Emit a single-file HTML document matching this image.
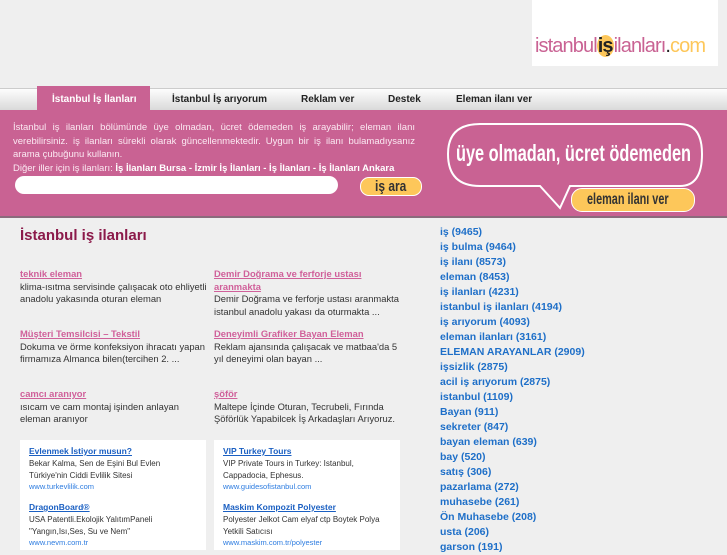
<!DOCTYPE html><html><head><meta charset="utf-8"><style>
body{margin:0;width:727px;height:545px;overflow:hidden;background:#efefef;font-family:"Liberation Sans",sans-serif;position:relative}
.a{position:absolute}
.logo{left:532px;top:0;width:186px;height:66px;background:#fff;overflow:hidden}
.nav{left:0;top:88px;width:727px;height:22px;background:linear-gradient(#fdfdfd,#d8d8d8);border-top:1px solid #ccc}
.nav span{position:absolute;top:5px;font-size:10px;font-weight:bold;color:#222}
.tab{left:37px;top:86px;width:113px;height:24px;background:#c96293}
.pink{left:0;top:110px;width:727px;height:106px;background:#c96293;border-bottom:2px solid #8a6b7c}
.intro{left:13px;top:121px;width:402px;font-size:9.5px;line-height:13.5px;color:#fbe9f2;text-align:justify}
.ttl{left:20px;top:227px;font-size:15px;font-weight:bold;color:#8b1a4a}
.it{position:absolute;width:196px;font-size:9.4px;line-height:12.7px;color:#333}
.it a{color:#d0609a;font-weight:bold;text-decoration:underline;display:block}
.ad{position:absolute;top:440px;width:186px;height:110px;background:#fff;font-size:8px;line-height:12px;color:#333}
.ad a{color:#1a5fc2;font-weight:bold;text-decoration:underline;font-size:8.5px}
.ad u{color:#2d7ce0;text-decoration:none;font-size:7.5px;display:block;line-height:9px}
.tags{left:440px;top:225px;font-size:10.5px;font-weight:bold;color:#1e6fc8;line-height:15px}
.cond{white-space:nowrap;transform-origin:left center;display:inline-block}
</style></head><body>
<div class="a logo"><div class="a" style="left:3px;top:35px;font-size:20px;color:#c96293;letter-spacing:-0.9px;white-space:nowrap">istanbul<span style="background:#fdc75a;border-radius:50%;color:#222;font-weight:bold;padding:0 1px">iş</span>ilanları<span style="color:#222">.</span><span style="color:#fdc75a">com</span></div></div>
<div class="a nav"><span style="left:172px">İstanbul İş arıyorum</span><span style="left:301px">Reklam ver</span><span style="left:388px">Destek</span><span style="left:456px">Eleman ilanı ver</span></div>
<div class="a tab"><span class="a" style="left:15px;top:8px;font-size:10px;font-weight:bold;color:#fff;white-space:nowrap">İstanbul İş İlanları</span></div>
<div class="a pink"></div>
<div class="a intro">İstanbul iş ilanları bölümünde üye olmadan, ücret ödemeden iş arayabilir; eleman ilanı verebilirsiniz. iş ilanları sürekli olarak güncellenmektedir. Uygun bir iş ilanı bulamadıysanız arama çubuğunu kullanın.<br>Diğer iller için iş ilanları: <b style="color:#fff">İş İlanları Bursa - İzmir İş İlanları - İş İlanları - İş İlanları Ankara</b></div>
<div class="a" style="left:15px;top:176px;width:323px;height:18px;background:#fff;border-radius:9px"></div>
<div class="a" style="left:360px;top:177px;width:60px;height:17px;background:#fdc75a;border:1px solid #fff;border-radius:9px;font-size:15px;line-height:17px;color:#333;font-weight:bold"><span class="cond" style="position:absolute;left:14px;transform:scaleX(.8)">iş ara</span></div>
<svg class="a" style="left:440px;top:118px" width="270" height="100"><path d="M40 6 H240 Q262 6 262 36 Q262 68 240 68 H130 L120 90 L100 68 H40 Q8 68 8 36 Q8 6 40 6Z" fill="none" stroke="#fff" stroke-width="2"/></svg>
<div class="a" style="left:456px;top:140px;font-size:23px;font-weight:bold;color:#fff"><span class="cond" style="transform:scaleX(.71)">üye olmadan, ücret ödemeden</span></div>
<div class="a" style="left:571px;top:188px;width:122px;height:22px;background:#fdc75a;border:1px solid #fff;border-radius:11px;line-height:22px;font-size:16px;color:#333;font-weight:bold"><span class="cond" style="position:absolute;left:15px;transform:scaleX(.68)">eleman ilanı ver</span></div>
<div class="a ttl">İstanbul iş ilanları</div>
<div class="it" style="left:20px;top:268px"><a>teknik eleman</a>klima-ısıtma servisinde çalışacak oto ehliyetli anadolu yakasında oturan eleman</div>
<div class="it" style="left:214px;top:268px;width:185px"><a>Demir Doğrama ve ferforje ustası aranmakta</a>Demir Doğrama ve ferforje ustası aranmakta istanbul anadolu yakası da oturmakta ...</div>
<div class="it" style="left:20px;top:328px"><a>Müşteri Temsilcisi – Tekstil</a>Dokuma ve örme konfeksiyon ihracatı yapan firmamıza Almanca bilen(tercihen 2. ...</div>
<div class="it" style="left:214px;top:328px;width:185px"><a>Deneyimli Grafiker Bayan Eleman</a>Reklam ajansında çalışacak ve matbaa'da 5 yıl deneyimi olan bayan ...</div>
<div class="it" style="left:20px;top:388px;width:180px"><a>camcı aranıyor</a>ısıcam ve cam montaj işinden anlayan eleman aranıyor</div>
<div class="it" style="left:214px;top:388px;width:185px"><a>şöför</a>Maltepe İçinde Oturan, Tecrubeli, Fırında Şöförlük Yapabilcek İş Arkadaşları Arıyoruz.</div>
<div class="ad" style="left:20px"><div style="padding:5px 9px"><a>Evlenmek İstiyor musun?</a><br>Bekar Kalma, Sen de Eşini Bul Evlen Türkiye'nin Ciddi Evlilik Sitesi<u>www.turkevlilik.com</u><div style="height:10px"></div><a>DragonBoard®</a><br>USA Patentli.Ekolojik YalıtımPaneli "Yangın,Isı,Ses, Su ve Nem"<u>www.nevm.com.tr</u></div></div>
<div class="ad" style="left:214px"><div style="padding:5px 9px"><a>VIP Turkey Tours</a><br>VIP Private Tours in Turkey: Istanbul, Cappadocia, Ephesus.<u>www.guidesofistanbul.com</u><div style="height:10px"></div><a>Maskim Kompozit Polyester</a><br>Polyester Jelkot Cam elyaf ctp Boytek Polya Yetkili Satıcısı<u>www.maskim.com.tr/polyester</u></div></div>
<div class="a tags">iş (9465)<br>iş bulma (9464)<br>iş ilanı (8573)<br>eleman (8453)<br>iş ilanları (4231)<br>istanbul iş ilanları (4194)<br>iş arıyorum (4093)<br>eleman ilanları (3161)<br>ELEMAN ARAYANLAR (2909)<br>işsizlik (2875)<br>acil iş arıyorum (2875)<br>istanbul (1109)<br>Bayan (911)<br>sekreter (847)<br>bayan eleman (639)<br>bay (520)<br>satış (306)<br>pazarlama (272)<br>muhasebe (261)<br>Ön Muhasebe (208)<br>usta (206)<br>garson (191)</div>
</body></html>
